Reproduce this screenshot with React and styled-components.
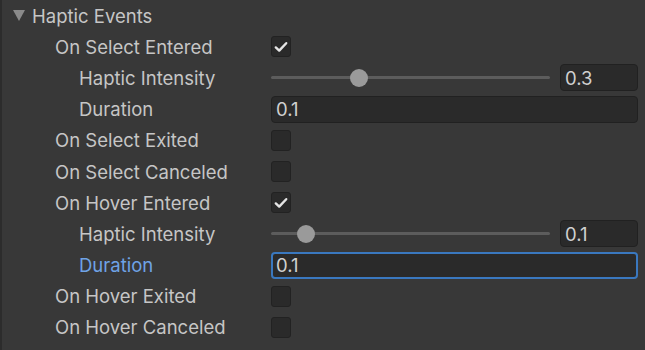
import React from "react";
import styled, { createGlobalStyle } from "styled-components";

const Global = createGlobalStyle`
  html, body { margin: 0; padding: 0; background: #383838; }
  body { width: 645px; height: 350px; overflow: hidden; }
`;

const Panel = styled.div`
  width: 645px;
  height: 350px;
  box-sizing: border-box;
  background: #383838;
  border-left: 2px solid #2c2c2c;
  font-family: Inter, "Noto Sans", sans-serif;
  font-size: 18.5px;
  color: #c6c6c6;
  display: flex;
  flex-direction: column;
`;

const Row = styled.div`
  height: 31.2px;
  flex: none;
  display: grid;
  grid-template-columns: 268px 1fr;
  align-items: center;
  padding-right: 7px;
`;

const Label = styled.div`
  padding-left: ${(p) => p.$indent}px;
  color: ${(p) => (p.$focus ? "#6fa3e6" : "#c6c6c6")};
  white-space: nowrap;
  display: flex;
  align-items: center;
  gap: 6px;
`;

const Foldout = styled.span`
  width: 0;
  height: 0;
  border-left: 6px solid transparent;
  border-right: 6px solid transparent;
  border-top: 11px solid #8a8a8a;
  margin-right: 1px;
`;

const Value = styled.div`
  display: flex;
  align-items: center;
  gap: 9px;
  height: 100%;
`;

const Check = styled.div`
  width: 20px;
  height: 21px;
  box-sizing: border-box;
  margin-left: 1px;
  background: #2a2a2a;
  border: 1px solid #222;
  border-radius: 3px;
  display: flex;
  align-items: center;
  justify-content: center;
`;

const Track = styled.div`
  position: relative;
  flex: 1;
  height: 3px;
  margin-left: 1px;
  background: #5c5c5c;
  border-radius: 2px;
`;

const Thumb = styled.div`
  position: absolute;
  top: 50%;
  width: 18px;
  height: 18px;
  margin-left: -9px;
  margin-top: -9px;
  border-radius: 50%;
  background: #9a9a9a;
`;

const Field = styled.div`
  box-sizing: border-box;
  height: 27px;
  width: ${(p) => (p.$small ? "78px" : "auto")};
  flex: ${(p) => (p.$small ? "none" : "1")};
  margin-left: 1px;
  background: #2a2a2a;
  border: ${(p) => (p.$focus ? "2px solid #3a78bf" : "1px solid #212121")};
  border-radius: 4px;
  display: flex;
  align-items: center;
  padding-left: ${(p) => (p.$focus ? 3 : 4)}px;
  color: #d0d0d0;
`;

const CheckMark = () => (
  <svg width="14" height="12" viewBox="0 0 14 12">
    <path d="M1.8 6.4 L5.2 9.6 L12.2 2.2" fill="none" stroke="#e6e6e6" strokeWidth="2.4" strokeLinecap="round" strokeLinejoin="round" />
  </svg>
);

const Slider = ({ value, num }) => (
  <Value>
    <Track>
      <Thumb style={{ left: `${8.5 + value * 265}px` }} />
    </Track>
    <Field $small>{num}</Field>
  </Value>
);

export default function App() {
  return (
    <>
      <Global />
      <Panel>
        <Row>
          <Label $indent={11}>
            <Foldout />
            Haptic Events
          </Label>
        </Row>
        <Row>
          <Label $indent={53}>On Select Entered</Label>
          <Value><Check><CheckMark /></Check></Value>
        </Row>
        <Row>
          <Label $indent={77}>Haptic Intensity</Label>
          <Slider value={0.3} num="0.3" />
        </Row>
        <Row>
          <Label $indent={77}>Duration</Label>
          <Value><Field>0.1</Field></Value>
        </Row>
        <Row>
          <Label $indent={53}>On Select Exited</Label>
          <Value><Check /></Value>
        </Row>
        <Row>
          <Label $indent={53}>On Select Canceled</Label>
          <Value><Check /></Value>
        </Row>
        <Row>
          <Label $indent={53}>On Hover Entered</Label>
          <Value><Check><CheckMark /></Check></Value>
        </Row>
        <Row>
          <Label $indent={77}>Haptic Intensity</Label>
          <Slider value={0.1} num="0.1" />
        </Row>
        <Row>
          <Label $indent={77} $focus>Duration</Label>
          <Value><Field $focus>0.1</Field></Value>
        </Row>
        <Row>
          <Label $indent={53}>On Hover Exited</Label>
          <Value><Check /></Value>
        </Row>
        <Row>
          <Label $indent={53}>On Hover Canceled</Label>
          <Value><Check /></Value>
        </Row>
      </Panel>
    </>
  );
}
